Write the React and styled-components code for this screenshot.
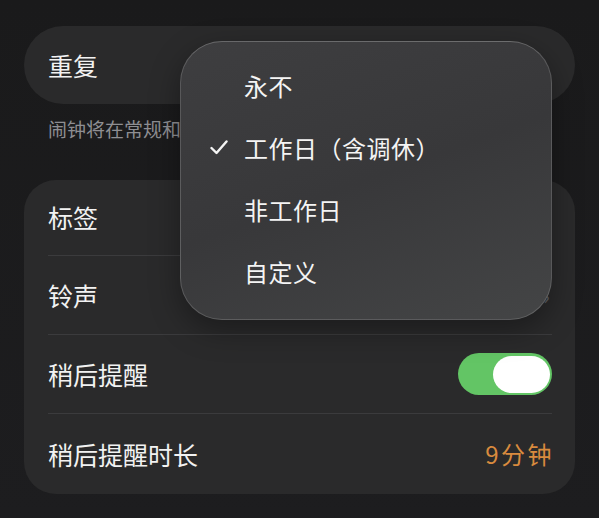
import React from "react";
import styled, { createGlobalStyle } from "styled-components";

const GlobalStyle = createGlobalStyle`
  html, body {
    margin: 0;
    padding: 0;
    background: #1c1c1e;
  }
  body {
    font-family: "Noto Sans CJK SC", "Noto Sans", sans-serif;
    color: #f2f2f2;
  }
`;

const Page = styled.div`
  position: relative;
  width: 599px;
  height: 518px;
  box-sizing: border-box;
  padding: 26px 24px 0;
  background: linear-gradient(180deg, #1a1a1b 0%, #1d1d1f 100%);
  overflow: hidden;
`;

const Card = styled.section`
  background: #2a2a2b;
  border-radius: ${(p) => p.$radius}px;
  padding: 0 23px 0 24px;
`;

const Row = styled.div`
  display: flex;
  align-items: center;
  justify-content: space-between;
  height: ${(p) => p.$h}px;
  border-bottom: ${(p) => (p.$last ? "none" : "1px solid #3b3b3d")};
  box-sizing: border-box;
`;

const Label = styled.span`
  font-size: 25px;
  line-height: 1;
  color: #f2f2f2;
`;

const Footer = styled.p`
  margin: 0;
  padding: 14px 24px 0;
  height: 76px;
  box-sizing: border-box;
  font-size: 19px;
  line-height: 1.2;
  color: #8e8e92;
`;

const Value = styled.span`
  font-size: 24px;
  line-height: 1;
  color: #d98b3e;
  letter-spacing: 2.5px;
  margin-right: -2px;
`;

const Chevron = styled.span`
  color: #5e5e62;
  font-size: 22px;
  margin-right: 2px;
`;

const Toggle = styled.div`
  width: 94px;
  height: 42px;
  border-radius: 21px;
  background: #63c565;
  display: flex;
  align-items: center;
  justify-content: flex-end;
  padding: 0 2px;
  box-sizing: border-box;
`;

const Knob = styled.div`
  width: 57px;
  height: 37px;
  border-radius: 18.5px;
  background: #ffffff;
`;

const Menu = styled.div`
  position: absolute;
  left: 180px;
  top: 41px;
  width: 372px;
  height: 279px;
  box-sizing: border-box;
  border-radius: 42px;
  background: linear-gradient(160deg, #3e3e40 0%, #38383a 50%, #444546 100%);
  border: 1px solid rgba(255, 255, 255, 0.16);
  border-top-color: rgba(255, 255, 255, 0.22);
  box-shadow: 0 10px 30px rgba(0, 0, 0, 0.35);
  display: flex;
  flex-direction: column;
  padding-top: 12px;
`;

const MenuItem = styled.div`
  display: flex;
  align-items: center;
  height: 62px;
  padding-left: 29px;
  font-size: 24px;
  color: #f4f4f4;
  letter-spacing: 0.5px;
`;

const Check = styled.span`
  width: 34px;
  display: inline-flex;
  align-items: center;
`;

const options = ["永不", "工作日（含调休）", "非工作日", "自定义"];

export default function App() {
  return (
    <>
      <GlobalStyle />
      <Page>
        <Card $radius={39}>
          <Row $h={78} $last>
            <Label>重复</Label>
          </Row>
        </Card>
        <Footer>闹钟将在常规和法定节假日响铃</Footer>
        <Card $radius={32}>
          <Row $h={76}>
            <Label>标签</Label>
          </Row>
          <Row $h={79}>
            <Label>铃声</Label>
            <Chevron>›</Chevron>
          </Row>
          <Row $h={79}>
            <Label>稍后提醒</Label>
            <Toggle>
              <Knob />
            </Toggle>
          </Row>
          <Row $h={80} $last>
            <Label>稍后提醒时长</Label>
            <Value>9分钟</Value>
          </Row>
        </Card>
        <Menu>
          {options.map((o, i) => (
            <MenuItem key={o}>
              <Check>
                {i === 1 && (
                  <svg width="18" height="15" viewBox="0 0 18 15">
                    <path d="M1.5 8 L6.5 13 L16.5 1.5" fill="none" stroke="#f4f4f4" strokeWidth="2.4" strokeLinecap="round" strokeLinejoin="round" />
                  </svg>
                )}
              </Check>
              {o}
            </MenuItem>
          ))}
        </Menu>
      </Page>
    </>
  );
}
